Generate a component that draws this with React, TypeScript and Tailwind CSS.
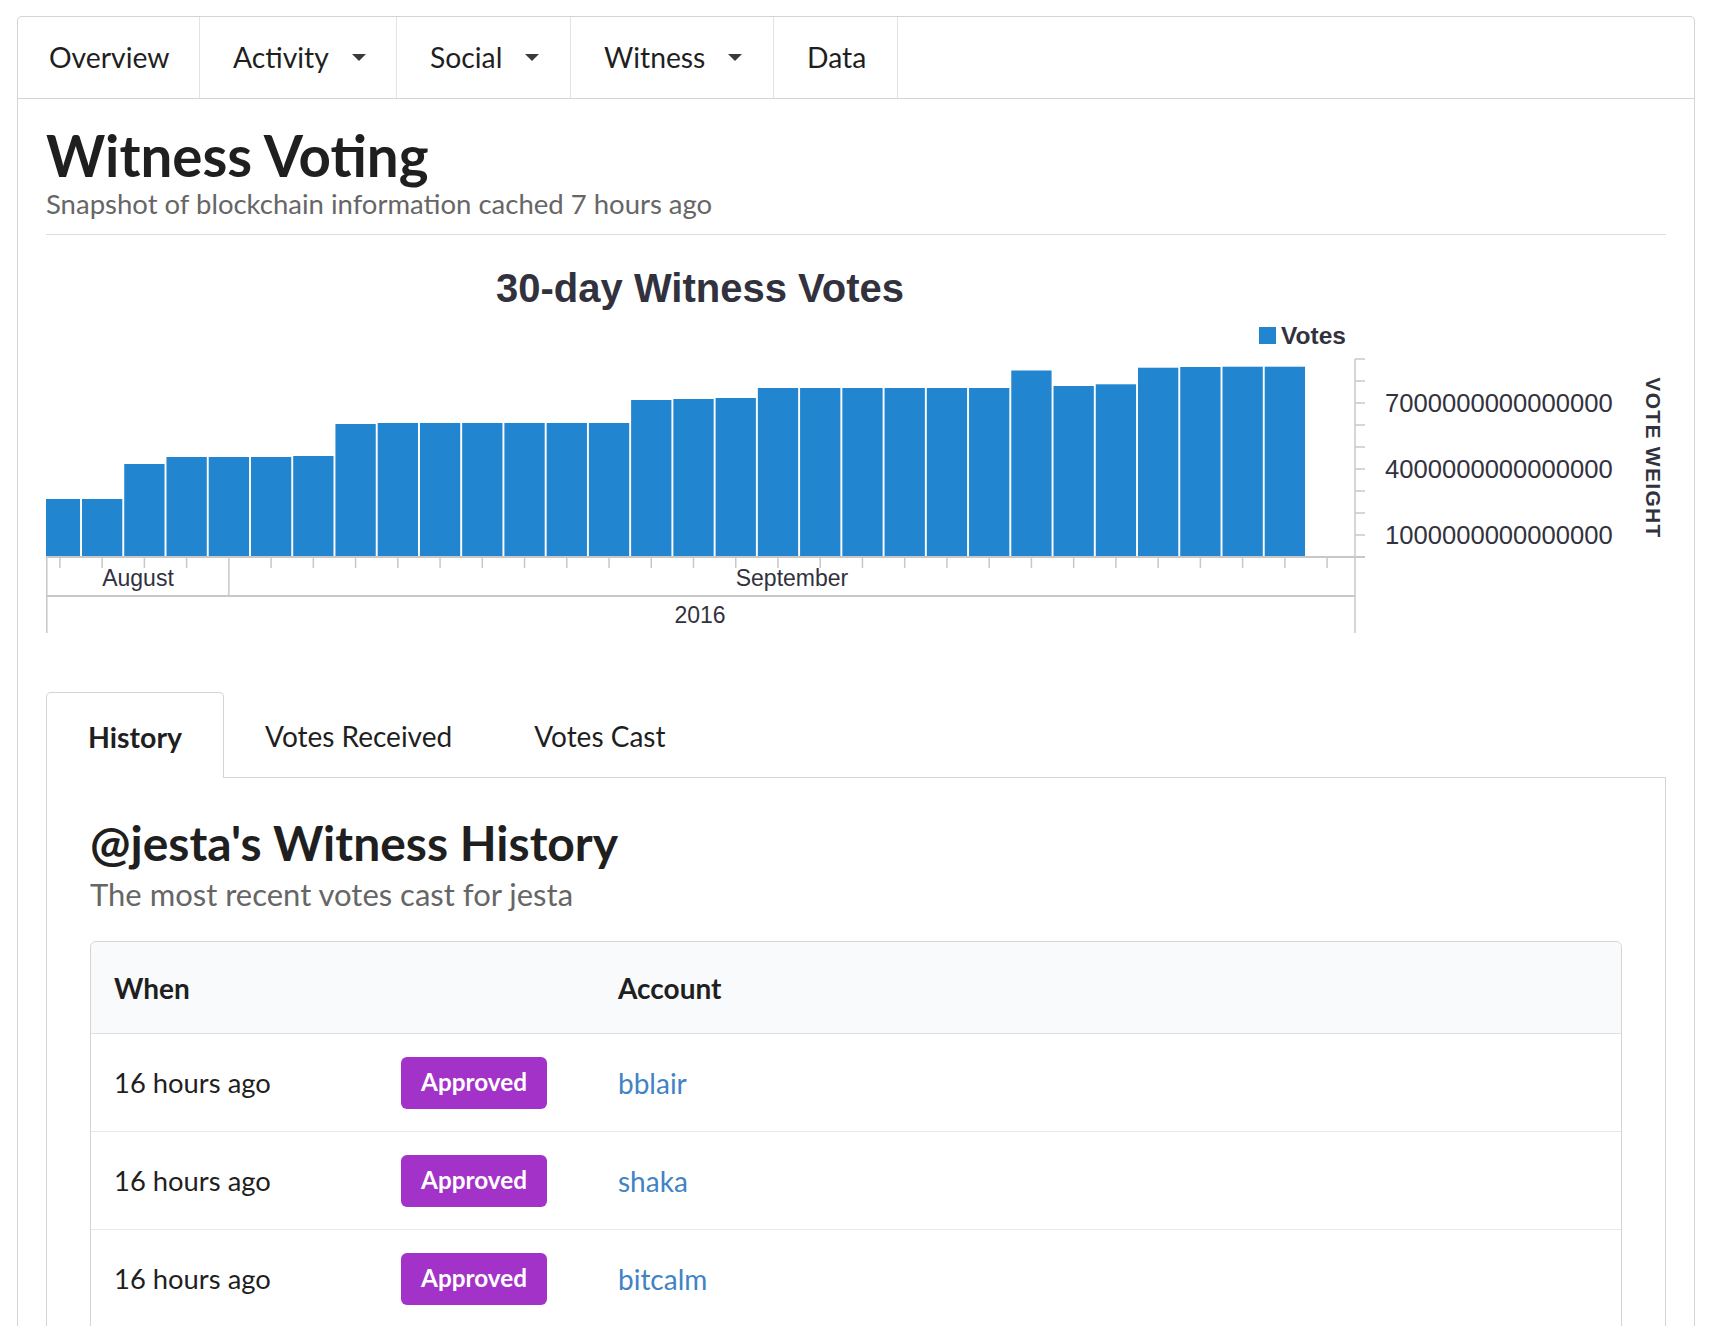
import React from 'react';

const navItems = [
  { label: 'Overview', width: 'w-[182px]', caret: false, pad: 'pl-[31px]' },
  { label: 'Activity', width: 'w-[197px]', caret: true, pad: 'pl-[33px]' },
  { label: 'Social', width: 'w-[174px]', caret: true, pad: 'pl-[33px]' },
  { label: 'Witness', width: 'w-[203px]', caret: true, pad: 'pl-[33px]' },
  { label: 'Data', width: 'w-[124px]', caret: false, pad: 'pl-[33px]' },
];

// bar tops in chart coords (baseline at 317)
const barTops = [
  259, 259, 224, 217, 217, 217, 216, 184, 183, 183, 183, 183, 183, 183, 160,
  159, 158, 148, 148, 148, 148, 148, 148, 130.5, 146, 144.3, 127.7, 127, 126.7, 126.7,
];

const history = [
  { when: '16 hours ago', account: 'bblair' },
  { when: '16 hours ago', account: 'shaka' },
  { when: '16 hours ago', account: 'bitcalm' },
];

const Caret = () => (
  <svg width="14" height="7" viewBox="0 0 14 7" className="ml-[23px]">
    <path d="M0 0 L14 0 L7 7 Z" fill="#3a3a3a" />
  </svg>
);

const VotesChart = () => {
  const axis = '#c8c8c8';
  const ink = '#32323e';
  const base = 317;
  const pitch = 42.24;
  return (
    <svg width="1619" height="400" viewBox="0 0 1619 400" fontFamily="'Liberation Sans', Arial, sans-serif">
      <text x="654" y="62" textAnchor="middle" fontSize="40" fontWeight="700" fill={ink}>
        30-day Witness Votes
      </text>

      <rect x="1213" y="87" width="17" height="17" fill="#2185d0" />
      <text x="1235" y="104" fontSize="24.5" fontWeight="700" fill={ink}>Votes</text>

      {barTops.map((top, i) => {
        const start = -6.24 + i * pitch;
        const x = Math.max(0, start);
        const w = start + 40.3 - x;
        return <rect key={i} x={x} y={top} width={w} height={base - top} fill="#2185d0" />;
      })}

      {/* x axis */}
      <line x1="0" y1={base} x2="1319" y2={base} stroke={axis} strokeWidth="2" />
      {Array.from({ length: 31 }).map((_, i) => {
        const x = 13.9 + i * pitch;
        return <line key={i} x1={x} y1={base} x2={x} y2={i === 4 ? 356 : 328} stroke={axis} strokeWidth="1.5" />;
      })}
      <line x1="0.75" y1={base} x2="0.75" y2="393" stroke={axis} strokeWidth="1.5" />
      <line x1="0" y1="356" x2="1309" y2="356" stroke={axis} strokeWidth="2" />
      <text x="92" y="346" textAnchor="middle" fontSize="23" fill={ink}>August</text>
      <text x="746" y="346" textAnchor="middle" fontSize="23" fill={ink}>September</text>
      <text x="654" y="383" textAnchor="middle" fontSize="23" fill={ink}>2016</text>

      {/* y axis */}
      <line x1="1309" y1="119" x2="1309" y2="393" stroke={axis} strokeWidth="1.5" />
      {Array.from({ length: 10 }).map((_, k) => (
        <line key={k} x1="1309" y1={base - 22 * k} x2="1319" y2={base - 22 * k} stroke={axis} strokeWidth="1.5" />
      ))}
      {[1, 4, 7].map((k) => (
        <text key={k} x="1339" y={base - 22 * k + 9} fontSize="25.6" fill={ink}>
          {`${k}000000000000000`}
        </text>
      ))}
      <text
        x="1607"
        y="218"
        transform="rotate(90 1607 218)"
        textAnchor="middle"
        dominantBaseline="central"
        fontSize="21"
        fontWeight="700"
        letterSpacing="1.3"
        fill={ink}
      >
        VOTE WEIGHT
      </text>
    </svg>
  );
};

export default function App() {
  return (
    <div className="min-h-screen bg-white font-['Lato',sans-serif] text-[#1f1f1f]">
      <div className="ml-[17px] mt-[16px] w-[1678px] rounded-t-[5px] border border-b-0 border-[#d4d4d5]">
        {/* top menu */}
        <div className="flex h-[82px] border-b border-[#d4d4d5]">
          {navItems.map((item) => (
            <div
              key={item.label}
              className={`flex items-center border-r border-[#e3e3e4] text-[28.3px] ${item.width} ${item.pad}`}
            >
              <span>{item.label}</span>
              {item.caret && <Caret />}
            </div>
          ))}
        </div>

        <div className="px-[28px] pt-[26px] pb-[20px]">
          <h1 className="text-[56.5px] font-bold leading-[60px] text-[#1f1f1f]">Witness Voting</h1>
          <p className="mt-[4px] text-[27.5px] leading-[30px] text-[#666]">
            Snapshot of blockchain information cached 7 hours ago
          </p>
          <div className="mt-[15px] h-px bg-[#dcdcdd]" />

          <div className="mt-[5px]">
            <VotesChart />
          </div>

          {/* tabs */}
          <div className="mt-[52px] flex h-[86px] items-end border-b border-[#d4d4d5]">
            <div className="-mb-px flex h-[86px] items-center rounded-t-[5px] border border-b-0 border-[#d4d4d5] bg-white px-[41px] pt-[3px] text-[28.5px] font-bold">
              History
            </div>
            <div className="flex h-[85px] items-center px-[41px] pt-[3px] text-[28px]">Votes Received</div>
            <div className="flex h-[85px] items-center px-[41px] pt-[3px] text-[28px]">Votes Cast</div>
          </div>

          <div className="border-x border-[#d4d4d5] px-[43px] pt-[45px] pb-[10px]">
            <h2 className="text-[48px] font-bold leading-[40px]">@jesta's Witness History</h2>
            <p className="mt-[14px] text-[31px] leading-[34px] text-[#666]">The most recent votes cast for jesta</p>

            <div className="mt-[30px] rounded-t-[6px] border border-[#d4d4d5]">
              <div className="grid h-[92px] grid-cols-[287px_217px_1fr] items-center rounded-t-[6px] border-b border-[#dfe0e1] bg-[#f9fafb] text-[28px] font-bold">
                <div className="pl-[23px]">When</div>
                <div />
                <div className="pl-[23px]">Account</div>
              </div>
              {history.map((row, i) => (
                <div
                  key={i}
                  className="grid h-[98px] grid-cols-[287px_217px_1fr] items-center border-b border-[#e8e8e9] text-[28px]"
                >
                  <div className="pl-[23px] text-[27.4px]">{row.when}</div>
                  <div className="pl-[23px]">
                    <span className="inline-flex h-[52px] w-[146px] items-center justify-center rounded-[6px] bg-[#a333c8] text-[24.3px] font-bold text-white">
                      Approved
                    </span>
                  </div>
                  <div className="pl-[23px]">
                    <a className="text-[#4183c4]">{row.account}</a>
                  </div>
                </div>
              ))}
            </div>
          </div>
        </div>
      </div>
    </div>
  );
}
